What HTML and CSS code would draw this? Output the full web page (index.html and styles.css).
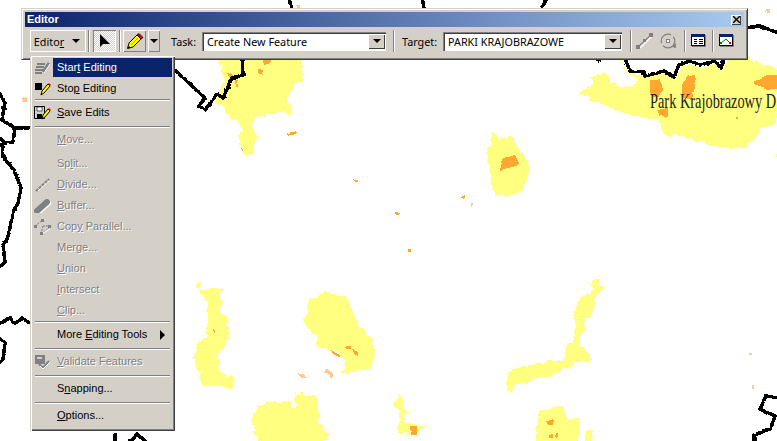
FILE: index.html
```html
<!DOCTYPE html>
<html lang="pl">
<head>
<meta charset="utf-8">
<title>Editor</title>
<link rel="stylesheet" href="styles.css">
</head>
<body>
<svg class="map" width="777" height="441" viewBox="0 0 777 441" aria-hidden="true">
  <defs>
    <filter id="rough" filterUnits="userSpaceOnUse" x="0" y="0" width="777" height="441" color-interpolation-filters="sRGB">
      <feTurbulence type="fractalNoise" baseFrequency="0.17" numOctaves="2" seed="7"/>
      <feDisplacementMap in="SourceGraphic" scale="7" xChannelSelector="R" yChannelSelector="G"/>
    </filter>
    <filter id="rough-line" filterUnits="userSpaceOnUse" x="0" y="0" width="777" height="441" color-interpolation-filters="sRGB">
      <feTurbulence type="fractalNoise" baseFrequency="0.22" numOctaves="1" seed="3"/>
      <feDisplacementMap in="SourceGraphic" scale="3" xChannelSelector="R" yChannelSelector="G"/>
    </filter>
  </defs>
  <g class="park">
    <polygon points="219,58 300,58 303,67 302,82 293,85 292,93 286,98 292,108 291,117 287,112 270,115 255,117 253,127 257,137 254,142 253,154 243,154 238,135 245,130 225,112 223,105 213,103 225,80 219,65"/>
    <polygon points="619,58 626,72 644,76 664,72 674,79 680,68 690,64 700,68 715,64 722,70 727,58 747,58 762,64 777,68 777,123 763,127 747,147 723,148 703,143 673,133 672,139 663,133 659,120 630,115 605,106 579,93 594,83 589,78 605,72 610,82 625,88 640,80 625,72"/>
    <polygon points="493,130 500,139 512,135 516,146 522,152 528,160 529,172 525,185 520,192 505,197 495,195 490,180 489,165 487,150 491,143"/>
    <polygon points="201,282 195,287 200,290 222,288 221,297 220,313 228,317 229,338 223,350 218,352 218,365 223,373 235,380 230,388 220,385 202,385 200,375 193,360 197,342 208,338 205,330 208,320 207,303 200,293"/>
    <polygon points="323,291 348,298 357,323 372,340 375,355 370,368 347,373 342,372 345,360 339,353 318,347 315,333 303,322 308,313 308,298 318,297"/>
    <polygon points="295,393 317,397 320,427 329,433 323,445 260,445 251,422 257,405 273,402 290,402 295,410"/>
    <polygon points="398,394 404,398 402,408 412,412 404,414 404,423 425,425 413,435 398,432 400,407 393,406"/>
    <polygon points="595,278 604,288 595,298 594,313 585,320 587,330 579,335 579,343 590,355 591,362 572,362 572,365 552,375 527,382 513,385 512,393 509,392 506,377 514,368 547,362 564,360 566,345 574,343 575,325 574,312 580,297 595,290 589,285"/>
    <polygon points="563,405 567,420 580,418 577,445 537,445 535,430 540,410"/>
    <polygon points="586,430 592,429 592,445 585,445"/>
    <polygon points="773,155 781,153 781,158 773,157"/>
  </g>
  <g class="core">
    <polygon points="650,80 660,80 663,90 657,98 650,95"/>
    <polygon points="657,110 668,108 668,117 660,116"/>
    <polygon points="688,75 695,75 695,85 692,100 682,97 682,85"/>
    <polygon points="753,82 767,75 781,75 781,88 767,90 757,85"/>
    <polygon points="736,117 738,117 738,120 736,120"/>
    <polygon points="503,158 515,155 520,165 500,170"/>
    <polygon points="258,69 263,70 262,74 258,74"/>
    <polygon points="263,60 272,58 270,63 264,65"/>
    <polygon points="235,80 237,80 238,87 236,87"/>
    <polygon points="227,73 233,75 233,77 229,77"/>
    <polygon points="287,133 297,131 294,135 288,135"/>
    <polygon points="353,178 358,180 358,182 355,182"/>
    <polygon points="463,196 466,194 464,199 461,198"/>
    <polygon points="395,212 400,213 399,215 396,215"/>
    <polygon points="408,249 411,249 411,252 408,252"/>
    <polygon points="241,148 244,148 243,151"/>
    <polygon points="213,329 215,329 215,333 214,333"/>
    <polygon points="331,350 340,355 339,357 333,354"/>
    <polygon points="346,346 351,346 351,349 346,349"/>
    <polygon points="353,349 358,352 358,356 354,354"/>
    <polygon points="410,426 417,426 417,434 411,434"/>
    <polygon points="547,421 554,419 553,425 549,425"/>
    <polygon points="549,435 553,435 553,438 549,438"/>
    <polygon points="556,434 558,434 558,437 556,437"/>
  </g>
  <g class="pale">
    <polygon points="298,373 304,374 306,378 301,378"/>
    <polygon points="327,368 329,371 333,373 333,378 330,378 328,373 324,373"/>
    <polygon points="22,98 27,97 27,102 23,102"/>
    <polygon points="296,6 300,5 300,8 297,8"/>
    <polygon points="766,9 770,9 770,13 767,13"/>
    <polygon points="749,353 752,353 752,355 749,355"/>
    <polygon points="752,385 754,385 754,388 752,388"/>
    <polygon points="471,203 473,203 473,206 471,206"/>
  </g>
  <g class="border">
    <polyline points="242,56 243,75 232,78 223,98 217,94 205,110 199,106 205,98 175,70"/>
    <polyline points="-4,88 5,102 2,120 15,128 34,128"/>
    <polyline points="34,128 15,128 13,142 5,143 -4,135"/>
    <polyline points="2,143 3,157 14,170 21,188 18,203 13,212 8,238 3,245 5,262 -4,270"/>
    <polyline points="-4,326 10,318 15,324 22,318 34,326"/>
    <polyline points="-4,336 5,343 3,359 -4,366"/>
    <polyline points="115,445 115,433"/>
    <polyline points="128,445 137,434 150,445"/>
    <polyline points="288,-4 292,9"/>
    <polyline points="422,-4 424,9"/>
    <polyline points="542,9 547,-4"/>
    <polyline points="745,28 760,26 781,34"/>
    <polyline points="598,58 600,62"/>
    <polyline points="624,56 630,71 644,72 645,76 664,71 674,77 679,65 690,61 700,65 715,61 721,68 725,56"/>
    <polyline points="781,398 766,396 760,409 775,416 770,429 754,435 754,445"/>
  </g>
  <text class="map-label" transform="translate(650 108) scale(.685 1)">Park Krajobrazowy D</text>
</svg>

<section class="window">
  <header class="title">
    <span>Editor</span>
    <span class="close"><svg width="7" height="7" viewBox="0 0 7 7"><path d="M0 0L7 7M7 0L0 7" class="x"/></svg></span>
  </header>
  <div class="bar">
    <div class="tool editor-btn"><span>Edito<u>r</u></span><i class="tri"></i></div>
    <span class="grip grip-editor"></span>
    <div class="tool pressed">
      <svg width="12" height="14" viewBox="0 0 12 14"><path d="M1 0L1 13L4 10L11 10Z" fill="#000"/></svg>
    </div>
    <span class="grip"></span>
    <div class="tool pencil">
      <svg width="18" height="17" viewBox="0 0 18 17">
        <path d="M1.500 15.500L3 10L11 2L15 6L7 14Z" fill="#ffff00" stroke="#000"/>
        <path d="M11 2L13 .5L17 4.500L15 6Z" fill="#e00000" stroke="#000" stroke-width=".8"/>
        <path d="M1.500 15.500L3 13L4.500 14.500Z" fill="#000"/>
        <path d="M5 12L12 5" stroke="#c0a000" fill="none"/>
      </svg>
    </div>
    <div class="tool drop"><i class="tri"></i></div>
    <label class="lbl task-lbl">Task:</label>
    <div class="combo task"><span>Create New Feature</span><b class="combo-btn"><i class="tri"></i></b></div>
    <span class="grip gap-l"></span>
    <label class="lbl target-lbl">Target:</label>
    <div class="combo target"><span>PARKI KRAJOBRAZOWE</span><b class="combo-btn"><i class="tri"></i></b></div>
    <span class="grip"></span>
    <svg class="ico ico-line" width="17" height="16" viewBox="0 0 17 16">
      <path d="M3 14L15 2" stroke="#fff" stroke-width="1.500" fill="none" transform="translate(1 1)"/>
      <path d="M3 13L15 2" stroke="#808080" stroke-width="1.200" fill="none"/>
      <rect x="0" y="12" width="4" height="4" fill="#808080"/><rect x="7" y="6" width="3" height="3" fill="#808080"/><rect x="13" y="0" width="4" height="4" fill="#808080"/>
    </svg>
    <svg class="ico ico-rot" width="17" height="16" viewBox="0 0 17 16">
      <circle cx="8" cy="8" r="6.800" fill="none" stroke="#808080" stroke-width="1.200" stroke-dasharray="16 3"/>
      <rect x="6.500" y="6.500" width="3" height="3" fill="#fff" stroke="#808080"/>
      <path d="M12 14L16 10L16 15Z" fill="#808080"/>
    </svg>
    <span class="grip grip-rot"></span>
    <svg class="ico ico-win" width="15" height="13" viewBox="0 0 15 13">
      <rect x=".5" y=".5" width="13" height="11" fill="#fff" stroke="#000"/><rect x="0" y="0" width="14" height="3" fill="#0a246a"/>
      <path d="M3 5.500h3M3 7.500h3M3 9.500h3M8 5.500h4M8 7.500h4M8 9.500h4" stroke="#000"/>
      <path d="M14.500 1V12.500H1" stroke="#808080" fill="none"/>
    </svg>
    <span class="grip grip-win"></span>
    <svg class="ico ico-win" width="15" height="13" viewBox="0 0 15 13">
      <rect x=".5" y=".5" width="13" height="11" fill="#fff" stroke="#000"/><rect x="0" y="0" width="14" height="3" fill="#0a246a"/>
      <path d="M2 9L7 5L11 9" stroke="#008000" fill="none"/><rect x="1" y="8" width="2" height="2" fill="#008000"/><rect x="10" y="8" width="2" height="2" fill="#e00000"/>
      <path d="M14.500 1V12.500H1" stroke="#808080" fill="none"/>
    </svg>
  </div>
</section>

<nav class="menu">
  <div class="row active">
    <svg class="mi" width="17" height="14" viewBox="0 0 17 14">
      <path d="M3 3h8M2 6h8M1 9h8M1 12h7" stroke="#808080" stroke-width="2" fill="none"/><path d="M9 11L15 2" stroke="#808080" stroke-width="3" fill="none"/><path d="M10 12L16 3" stroke="#fff" fill="none"/>
    </svg>
    <span class="label">Star<u>t</u> Editing</span>
  </div>
  <div class="row">
    <svg class="mi" width="17" height="14" viewBox="0 0 17 14">
      <rect x="1" y="1" width="7" height="7" fill="#000"/>
      <path d="M7 13L8 9L14 2L16 4L10 11Z" fill="#ffff00" stroke="#000"/><path d="M14 2L15 1L17 3L16 4Z" fill="#e00000"/>
    </svg>
    <span class="label">Sto<u>p</u> Editing</span>
  </div>
  <hr class="sep">
  <div class="row">
    <svg class="mi" width="17" height="14" viewBox="0 0 17 14">
      <path d="M.5.500H10.500V12.500H.5Z" fill="#d4d0c8" stroke="#000"/><rect x="3" y="1" width="5" height="4" fill="#fff" stroke="#000" stroke-width=".6"/><rect x="3" y="8" width="5" height="4" fill="#000"/>
      <path d="M8 13L9 9L14 3L16 5L11 11Z" fill="#ffff00" stroke="#000"/><path d="M14 3L15 2L17 4L16 5Z" fill="#e00000"/>
    </svg>
    <span class="label"><u>S</u>ave Edits</span>
  </div>
  <hr class="sep wide">
  <div class="row off"><span class="label"><u>M</u>ove...</span></div>
  <div class="spacer"></div>
  <div class="row off"><span class="label">Sp<u>l</u>it...</span></div>
  <div class="row off">
    <svg class="mi" width="17" height="14" viewBox="0 0 17 14">
      <path d="M2 13L15 1" stroke="#808080" stroke-width="2" stroke-dasharray="3 1" fill="none"/><path d="M4 13L16 2" stroke="#fff" stroke-dasharray="3 1" fill="none"/>
    </svg>
    <span class="label"><u>D</u>ivide...</span>
  </div>
  <div class="row off">
    <svg class="mi" width="17" height="14" viewBox="0 0 17 14">
      <path d="M3 12L13 3" stroke="#fff" stroke-width="6" stroke-linecap="round" transform="translate(1 1)"/>
      <path d="M3 12L13 3" stroke="#808080" stroke-width="6" stroke-linecap="round"/>
    </svg>
    <span class="label"><u>B</u>uffer...</span>
  </div>
  <div class="row off">
    <svg class="mi" width="17" height="16" viewBox="0 0 17 16">
      <path d="M1 7L9 1M9 7L16 7M7 15L16 8M9 7L7 15" stroke="#808080" stroke-dasharray="2 1" fill="none"/>
      <rect x="0" y="6" width="3" height="3" fill="#808080"/><rect x="7" y="0" width="3" height="3" fill="#808080"/><rect x="14" y="6" width="3" height="3" fill="#808080"/><rect x="6" y="13" width="3" height="3" fill="#808080"/>
      <path d="M9 14L16 10" stroke="#fff" fill="none"/>
    </svg>
    <span class="label">Cop<u>y</u> Parallel...</span>
  </div>
  <div class="row off"><span class="label">Merge...</span></div>
  <div class="row off"><span class="label"><u>U</u>nion</span></div>
  <div class="row off"><span class="label"><u>I</u>ntersect</span></div>
  <div class="row off"><span class="label"><u>C</u>lip...</span></div>
  <hr class="sep">
  <div class="row"><span class="label">More <u>E</u>diting Tools</span><i class="sub"></i></div>
  <hr class="sep wide">
  <div class="row off">
    <svg class="mi" width="17" height="16" viewBox="0 0 17 16">
      <rect x="1" y="1" width="10" height="9" fill="#808080"/><rect x="3" y="3" width="5" height="2" fill="#d4d0c8"/>
      <path d="M5 10L9 14L15 7" stroke="#808080" stroke-width="2" fill="none"/><path d="M6 12L9 15L16 8" stroke="#fff" fill="none"/>
    </svg>
    <span class="label"><u>V</u>alidate Features</span>
  </div>
  <hr class="sep wide">
  <div class="row"><span class="label">S<u>n</u>apping...</span></div>
  <hr class="sep wide">
  <div class="row"><span class="label"><u>O</u>ptions...</span></div>
</nav>
</body>
</html>
```
FILE: styles.css
```css
* { box-sizing: border-box; }
html, body { margin: 0; padding: 0; }
body {
  position: relative;
  width: 777px;
  height: 441px;
  overflow: hidden;
  background: #fff;
  font: 11px/13px "Liberation Sans", sans-serif;
  color: #000;
}

.map { position: absolute; left: 0; top: 0; display: block; }
.map polygon, .map polyline { shape-rendering: crispEdges; }
.park { fill: #ffff80; filter: url(#rough); }
.core { fill: #ffa72f; filter: url(#rough-line); }
.pale { fill: #ffc98f; filter: url(#rough-line); }
.border { fill: none; stroke: #000; stroke-width: 3.500; stroke-linejoin: round; filter: url(#rough-line); }
.map-label { font: 21px "Liberation Serif", serif; fill: #222; }

.window {
  position: absolute;
  left: 21px;
  top: 8px;
  width: 727px;
  height: 52px;
  padding: 3px;
  background: #d4d0c8;
  border: 1px solid;
  border-color: #d4d0c8 #404040 #404040 #d4d0c8;
  box-shadow: inset 1px 1px 0 #fff, inset -1px -1px 0 #808080;
}
.title {
  display: flex;
  align-items: center;
  justify-content: space-between;
  height: 15px;
  padding: 0 3px 0 2px;
  background: linear-gradient(90deg, #0a246a, #a6caf0);
  color: #fff;
  font-weight: 700;
}
.close {
  display: flex;
  align-items: center;
  justify-content: center;
  width: 10px;
  height: 10px;
  background: #d4d0c8;
  box-shadow: inset 1px 1px 0 #fff, inset -1px -1px 0 #404040;
}
.x { stroke: #000; fill: none; stroke-width: 1.400; }

.bar {
  display: flex;
  align-items: center;
  height: 24px;
  margin-top: 2px;
  padding-left: 5px;
  font-family: "Noto Sans", sans-serif;
  font-size: 10.800px;
}
.tool {
  display: flex;
  align-items: center;
  justify-content: center;
  flex: none;
  height: 22px;
  box-shadow: inset 1px 1px 0 #fff, inset -1px -1px 0 #808080;
}
.editor-btn {
  width: 56px;
  gap: 8px;
  padding-right: 2px;
  box-shadow: inset 1px 1px 0 #fff, inset -1px -1px 0 #fff, inset 0 0 0 1px #b8b4ac;
}
.pressed {
  width: 23px;
  margin: 0 3px;
  background: repeating-conic-gradient(#fff 0 25%, #d4d0c8 0 50%) 0 0 / 2px 2px;
  box-shadow: inset 1px 1px 0 #808080, inset -1px -1px 0 #fff;
}
.pencil { width: 23px; margin-left: 2px; }
.drop { width: 12px; margin-left: 2px; }
.tri {
  display: block;
  width: 0;
  height: 0;
  border-style: solid;
  border-width: 4px 4px 0;
  border-color: #000 transparent transparent;
}
.grip {
  flex: none;
  width: 2px;
  height: 22px;
  background: linear-gradient(90deg, #808080 50%, #fff 50%);
}
.grip-editor { margin-left: 2px; }
.grip-rot { margin-left: 7px; }
.grip-win { margin-left: 6px; }
.gap-l { margin-left: 7px; }
.lbl { flex: none; }
.task-lbl { margin-left: 11px; width: 31px; }
.target-lbl { margin-left: 7px; width: 41px; }
.combo {
  display: flex;
  align-items: center;
  justify-content: space-between;
  flex: none;
  height: 19px;
  padding: 2px 1px 2px 5px;
  background: #fff;
  box-shadow: inset 1px 1px 0 #808080, inset 2px 2px 0 #404040, inset -1px -1px 0 #fff;
}
.task { width: 184px; }
.target { width: 179px; margin-right: 8px; }
.combo-btn {
  display: flex;
  align-items: center;
  justify-content: center;
  width: 17px;
  height: 15px;
  background: #d4d0c8;
  box-shadow: inset 1px 1px 0 #fff, inset -1px -1px 0 #404040;
}
.ico { flex: none; margin-top: -1px; }
.ico-line { margin-left: 4px; }
.ico-rot { margin-left: 7px; }
.ico-win { margin-left: 5px; }

.menu {
  position: absolute;
  left: 30px;
  top: 55px;
  width: 145px;
  height: 376px;
  padding: 2px 3px 0;
  background: #d4d0c8;
  box-shadow: inset 1px 1px 0 #d4d0c8, inset 2px 2px 0 #fff, inset -1px -1px 0 #404040, inset -2px -2px 0 #808080;
}
.row {
  position: relative;
  display: flex;
  align-items: center;
  height: 21px;
  padding: 0 0 0 20px;
}
.mi { position: absolute; left: 1px; top: 50%; transform: translateY(-50%); }
.label { flex: 1; height: 19px; padding: 3px 4px; white-space: nowrap; }
.active .label { background: #0a246a; color: #fff; }
.off .label { color: #808080; text-shadow: 1px 1px 0 #fff; }
.sep {
  height: 3px;
  margin: 0 2px;
  padding: 0;
  border: 0;
  background: linear-gradient(#808080 0 1px, #fff 1px 2px, transparent 2px);
}
.wide { height: 6px; background-position: 0 3px; background-size: 100% 3px; background-repeat: no-repeat; }
.spacer { height: 3px; }
.sub {
  width: 0;
  height: 0;
  margin-right: 7px;
  border-style: solid;
  border-width: 5px 0 5px 5px;
  border-color: transparent transparent transparent #000;
}
```
